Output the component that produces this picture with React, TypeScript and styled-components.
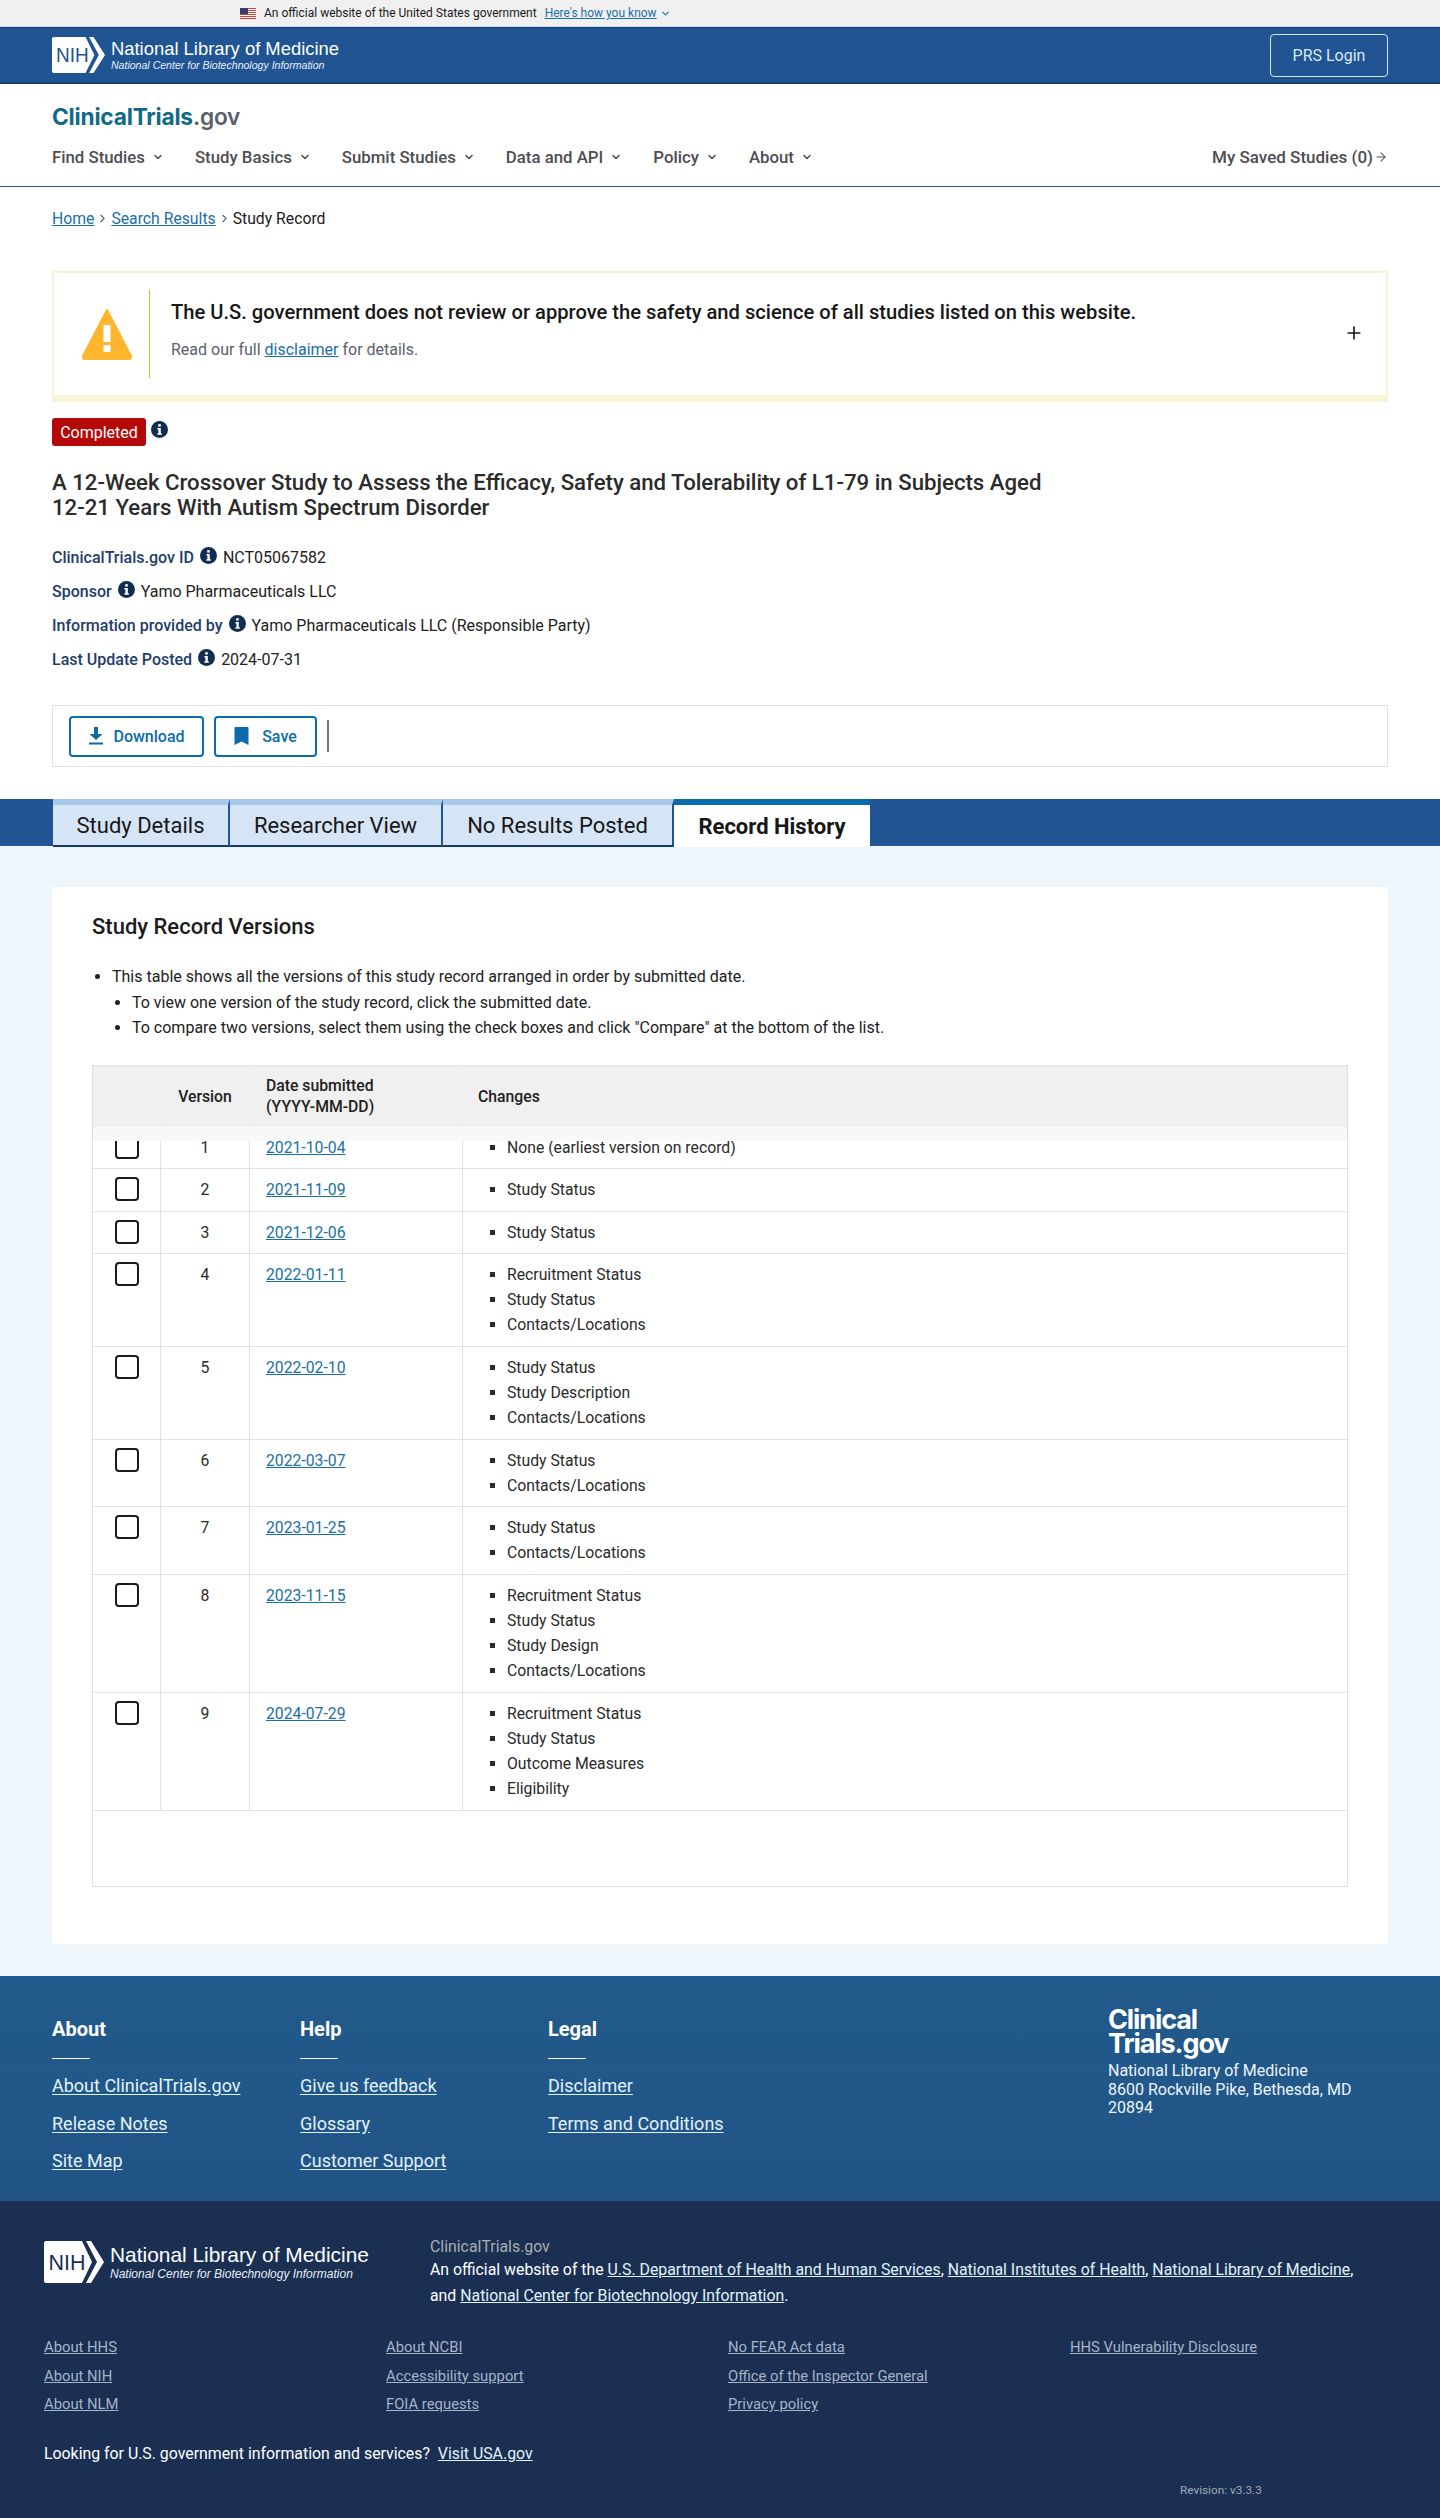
import React from "react";
import styled, { createGlobalStyle } from "styled-components";
import { ChevronDown, ChevronRight, ArrowRight, Plus } from "lucide-react";

const Global = createGlobalStyle`
  html, body { margin: 0; padding: 0; background: #fff; }
  body { font-family: Roboto, "Liberation Sans", sans-serif; font-size: 16px; color: #212121; }
  * { box-sizing: border-box; }
`;

const linkBlue = "#1a6fa5";

const Page = styled.div`width: 1440px; height: 2518px; overflow: hidden;`;

const GovBanner = styled.div`
  height: 27px; background: #f0f0f0; border-bottom: 1px solid #c9dff0;
  display: flex; align-items: center; padding-left: 240px; font-size: 12px; color: #1b1b1b;
`;
const GovText = styled.span`margin-left: 8px;`;
const GovLink = styled.a`margin-left: 8px; color: ${linkBlue}; text-decoration: underline;`;
const GovChevron = styled(ChevronDown)`margin-left: 3px; color: ${linkBlue};`;

const NihBand = styled.div`
  height: 57px; background: #205493; border-top: 1px solid #17406f; border-bottom: 2px solid #17406f;
  display: flex; align-items: center; justify-content: space-between; padding: 0 52px;
`;
const NihLogoWrap = styled.div<{ $footer?: boolean }>`
  display: flex; align-items: center; gap: 6px; color: #fff; font-family: "Liberation Sans", Arial, sans-serif;
`;
const NihTitle = styled.div<{ $footer?: boolean }>`
  font-size: ${p => (p.$footer ? 20.9 : 18.4)}px; line-height: ${p => (p.$footer ? 24 : 21)}px; white-space: nowrap;
`;
const NihSub = styled.div<{ $footer?: boolean }>`
  font-size: ${p => (p.$footer ? 12 : 10.55)}px; line-height: ${p => (p.$footer ? 14 : 13)}px; font-style: italic; white-space: nowrap; color: #e8eef6;
`;
const PrsLogin = styled.a`
  width: 118px; height: 43px; border: 1px solid #d9e8f6; border-radius: 4px; display: flex; align-items: center; justify-content: center;
  color: #d9e8f6; font-size: 16px;
`;

const SiteHeader = styled.header`
  height: 103px; border-bottom: 1px solid #205493; padding: 19px 52px 0;
`;
const Brand = styled.div`
  font-family: Inter, "Open Sans", sans-serif; font-size: 22.7px; font-weight: 700; line-height: 28px; color: #0f6a8a; letter-spacing: -0.2px;
`;
const BrandGov = styled.span`color: #5b616b; font-weight: 600;`;
const NavRow = styled.nav`
  display: flex; align-items: center; justify-content: space-between; margin-top: 14px; height: 24px;
`;
const NavItems = styled.div`display: flex; gap: 31px;`;
const NavItem = styled.a`
  display: flex; align-items: center; gap: 7px; font-size: 16.8px; font-weight: 500; color: #4d4d52; white-space: nowrap;
`;
const SavedLink = styled.a`
  display: flex; align-items: center; gap: 1px; font-size: 17px; font-weight: 500; color: #4d4d52; margin-top: -1px;
`;

const Breadcrumbs = styled.div`
  display: flex; align-items: center; gap: 2px; height: 24px; margin: 19px 52px 0; font-size: 15.75px; color: #212121;
`;
const Crumb = styled.a`color: ${linkBlue}; text-decoration: underline;`;
const CrumbSep = styled(ChevronRight)`color: #5b616b;`;

const Disclaimer = styled.section`
  margin: 41px 52px 0; height: 131px; border: 2px solid #f7f3d6; border-bottom-width: 7px; display: flex; align-items: center; position: relative;
`;
const WarnIconBox = styled.div`
  width: 96px; height: 88px; border-right: 1px solid #f0b429; display: flex; align-items: center; justify-content: flex-end; padding-right: 16px; flex: none;
`;
const DisclaimerBody = styled.div`padding: 0 0 9px 21px; flex: 1;`;
const DisclaimerTitle = styled.div`font-size: 20.15px; font-weight: 500; color: #171717; line-height: 28px;`;
const DisclaimerText = styled.div`font-size: 16px; color: #5b616b; line-height: 24px; margin-top: 12px;`;
const DisclaimerLink = styled.a`color: ${linkBlue}; text-decoration: underline;`;
const PlusIcon = styled(Plus)`margin: -2px 22px 0 0; color: #171717; flex: none;`;

const BadgeRow = styled.div`display: flex; align-items: flex-start; gap: 5px; margin: 16px 52px 0;`;
const Badge = styled.span`
  width: 94px; height: 28px; background: #b50909; color: #fff; border-radius: 3px; font-size: 16px; display: flex; align-items: center; justify-content: center;
`;
const InfoSvg = styled.svg<{ $mt?: number }>`flex: none; margin-top: ${p => p.$mt ?? 0}px;`;

const Title = styled.h1`
  margin: 24px 52px 0; width: 1020px; font-size: 22.2px; line-height: 25px; font-weight: 500; color: #2b2b2b;
`;
const Meta = styled.div`margin: 20px 52px 0;`;
const MetaRow = styled.div`height: 34px; display: flex; align-items: center; gap: 6px;`;
const MetaLabel = styled.span`font-size: 16px; font-weight: 500; color: #1f3c6b;`;
const MetaValue = styled.span`font-size: 16px; color: #212121; margin-top: 1px;`;

const ActionBar = styled.div`
  margin: 29px 52px 0; height: 62px; border: 1px solid #e4e2e0; display: flex; align-items: center; padding-left: 16px; gap: 10px;
`;
const ActionButton = styled.a<{ $w: number }>`
  width: ${p => p.$w}px; height: 41px; border: 2px solid #0b6cab; border-radius: 4px; color: #0b6cab; font-size: 16px; font-weight: 500;
  display: flex; align-items: center; justify-content: center; gap: 9px;
`;
const ActionDivider = styled.span`width: 2px; height: 32px; background: #71767a;`;

const TabBand = styled.div`
  margin-top: 32px; height: 47px; background: #205493; display: flex; padding-left: 53px;
`;
const Tab = styled.a<{ $w: number; $active?: boolean }>`
  width: ${p => p.$w}px; height: 48px; font-size: 22px; display: flex; align-items: center; justify-content: center; color: #171717;
  background: ${p => (p.$active ? "#fff" : "#d5e5f5")};
  border-top: 6px solid ${p => (p.$active ? "#0b6cab" : "#a9c9ea")};
  font-weight: ${p => (p.$active ? 700 : 400)};
  ${p => (p.$active ? "" : "border-right: 2px solid #205493; border-bottom: 2px solid #17396b;")}
`;

const Content = styled.main`
  height: 1130px; background: #eff6fb; padding: 41px 52px 0;
`;
const Card = styled.section`
  height: 1057px; background: #fff; padding: 24px 40px 0;
`;
const CardTitle = styled.h2`margin: 0; font-size: 22px; font-weight: 500; line-height: 32px; color: #1b1b1b;`;
const Intro = styled.ul`
  margin: 21px 0 0; padding: 0 0 0 20px; font-size: 16px; line-height: 25.6px; list-style: disc; color: #212121;
`;
const SubIntro = styled.ul`margin: 0; padding: 0 0 0 20px; list-style: disc;`;

const Table = styled.div`
  margin-top: 24px; border: 1px solid #dfe1e2; position: relative; height: 822px;
`;
const Cols = "68px 89px 213px 1fr";
const HeaderRow = styled.div`
  height: 61px; background: #f0f0f0; display: grid; grid-template-columns: ${Cols}; font-size: 15.75px; font-weight: 500; color: #212121; position: relative;
  &::after {
    content: ""; position: absolute; left: 0; right: 0; top: 61px; height: 14px; background: #f8f8f8; z-index: 2;
  }
`;
const HeadCell = styled.div<{ $center?: boolean }>`
  padding: 5px 16px; display: flex; align-items: center; line-height: 21px;
  justify-content: ${p => (p.$center ? "center" : "flex-start")};
  border-right: 1px solid #ececec;
  &:last-child { border-right: none; padding-left: 15px; }
`;
const Row = styled.div`
  display: grid; grid-template-columns: ${Cols}; border-bottom: 1px solid #dfe1e2; font-size: 15.75px; line-height: 25.2px; color: #2a2a2a;
`;
const Cell = styled.div<{ $center?: boolean }>`
  padding: 8px 16px 8.2px; border-right: 1px solid #dfe1e2;
  text-align: ${p => (p.$center ? "center" : "left")};
  &:last-child { border-right: none; }
`;
const CheckCell = styled(Cell)`padding: 8px 0 0 22px;`;
const Check = styled.span`
  display: block; width: 24px; height: 24px; border: 2px solid #1b1b1b; border-radius: 4px; background: #fff;
`;
const DateLink = styled.a`color: ${linkBlue}; text-decoration: underline;`;
const Changes = styled.ul`margin: 0; padding: 0 0 0 28px; list-style: square;`;

const FooterTop = styled.footer`
  height: 225px; background: linear-gradient(#215a8c, #225486); padding: 37px 52px 0 52px; display: flex; color: #fff;
`;
const FootCol = styled.div`width: 248px;`;
const FootHead = styled.div`font-size: 20px; font-weight: 700; line-height: 32px;`;
const FootRule = styled.div`width: 38px; height: 1px; background: #fff; margin: 13px 0 8px;`;
const FootLink = styled.a`
  display: block; font-size: 18px; line-height: 37.5px; color: #e1f3f8; text-decoration: underline; text-underline-offset: 2px; white-space: nowrap;
`;
const FootBrand = styled.div`margin-left: auto; width: 280px; margin-top: -5px;`;
const FootBrandName = styled.div`font-family: Inter, "Open Sans", sans-serif; font-size: 27px; font-weight: 700; line-height: 24px; letter-spacing: -1.1px;`;
const FootAddress = styled.div`font-size: 16px; line-height: 18.5px; margin-top: 6px; color: #eef5fb;`;

const FooterBottom = styled.footer`
  height: 317px; background: #1a2f52; padding: 35px 44px 0; color: #fff; position: relative;
`;
const OfficialRow = styled.div`display: flex;`;
const OfficialLogo = styled.div`width: 386px; padding-top: 5px;`;
const OfficialText = styled.div`width: 930px; font-size: 15.85px; line-height: 26px;`;
const OfficialName = styled.div`color: #a9aeb1; line-height: 21px;`;
const OfficialLink = styled.a`color: #e1f3f8; text-decoration: underline;`;
const LegalGrid = styled.div`
  margin-top: 24px; display: grid; grid-template-columns: repeat(4, 342px);
`;
const LegalLink = styled.a`
  display: block; font-size: 14.8px; line-height: 28.6px; color: #a6b4c8; text-decoration: underline; white-space: nowrap;
`;
const Usa = styled.div`margin-top: 23px; font-size: 15.85px; line-height: 24px; color: #fff;`;
const UsaLink = styled.a`color: #e1f3f8; text-decoration: underline; margin-left: 4px;`;
const Revision = styled.div`
  position: absolute; left: 1180px; top: 282px; font-size: 11.8px; color: #a0a9b5;
`;

const NihMark: React.FC<{ w: number; h: number; navy: string }> = ({ w, h, navy }) => (
  <svg width={w} height={h} viewBox="0 0 60 48" preserveAspectRatio="none" fill="none">
    <path d="M2 0H38L48 24L38 48H2C1 48 0 47 0 46V2C0 1 1 0 2 0Z" fill="#fff" />
    <path d="M42 0H47L60 24L47 48H42L53 24Z" fill="#fff" />
    <text x="4.5" y="33" fontFamily="Liberation Sans, Arial, sans-serif" fontSize="26" fill={navy} textLength="37" lengthAdjust="spacingAndGlyphs">NIH</text>
  </svg>
);

const Info: React.FC<{ mt?: number }> = ({ mt }) => (
  <InfoSvg $mt={mt} width="17" height="17" viewBox="0 0 17 17">
    <circle cx="8.5" cy="8.5" r="8.5" fill="#112e51" />
    <rect x="7.2" y="3.2" width="2.6" height="2.4" fill="#fff" />
    <path d="M6.4 7H9.8V12.2H10.8V13.8H6.4V12.2H7.4V8.6H6.4Z" fill="#fff" />
  </InfoSvg>
);

const Flag = () => (
  <svg width="16" height="11" viewBox="0 0 16 11">
    <rect width="16" height="11" fill="#fff" />
    {[0, 2, 4, 6, 8, 10].map(y => <rect key={y} y={y} width="16" height="1" fill="#d8412f" />)}
    <rect width="8" height="6" fill="#3c3b6e" />
  </svg>
);

const versions: { n: number; d: string; c: string[] }[] = [
  { n: 1, d: "2021-10-04", c: ["None (earliest version on record)"] },
  { n: 2, d: "2021-11-09", c: ["Study Status"] },
  { n: 3, d: "2021-12-06", c: ["Study Status"] },
  { n: 4, d: "2022-01-11", c: ["Recruitment Status", "Study Status", "Contacts/Locations"] },
  { n: 5, d: "2022-02-10", c: ["Study Status", "Study Description", "Contacts/Locations"] },
  { n: 6, d: "2022-03-07", c: ["Study Status", "Contacts/Locations"] },
  { n: 7, d: "2023-01-25", c: ["Study Status", "Contacts/Locations"] },
  { n: 8, d: "2023-11-15", c: ["Recruitment Status", "Study Status", "Study Design", "Contacts/Locations"] },
  { n: 9, d: "2024-07-29", c: ["Recruitment Status", "Study Status", "Outcome Measures", "Eligibility"] },
];

const meta: [string, string][] = [
  ["ClinicalTrials.gov ID", "NCT05067582"],
  ["Sponsor", "Yamo Pharmaceuticals LLC"],
  ["Information provided by", "Yamo Pharmaceuticals LLC (Responsible Party)"],
  ["Last Update Posted", "2024-07-31"],
];

const footCols: [string, string[]][] = [
  ["About", ["About ClinicalTrials.gov", "Release Notes", "Site Map"]],
  ["Help", ["Give us feedback", "Glossary", "Customer Support"]],
  ["Legal", ["Disclaimer", "Terms and Conditions"]],
];

const legal = [
  ["About HHS", "About NIH", "About NLM"],
  ["About NCBI", "Accessibility support", "FOIA requests"],
  ["No FEAR Act data", "Office of the Inspector General", "Privacy policy"],
  ["HHS Vulnerability Disclosure"],
];

export default function App() {
  return (
    <Page>
      <Global />
      <GovBanner>
        <Flag />
        <GovText>An official website of the United States government</GovText>
        <GovLink>Here's how you know</GovLink>
        <GovChevron size={11} strokeWidth={2.5} />
      </GovBanner>
      <NihBand>
        <NihLogoWrap>
          <NihMark w={53} h={36} navy="#205493" />
          <div>
            <NihTitle>National Library of Medicine</NihTitle>
            <NihSub>National Center for Biotechnology Information</NihSub>
          </div>
        </NihLogoWrap>
        <PrsLogin>PRS Login</PrsLogin>
      </NihBand>
      <SiteHeader>
        <Brand>ClinicalTrials<BrandGov>.gov</BrandGov></Brand>
        <NavRow>
          <NavItems>
            {["Find Studies", "Study Basics", "Submit Studies", "Data and API", "Policy", "About"].map(t => (
              <NavItem key={t}>{t}<ChevronDown size={12} strokeWidth={3} /></NavItem>
            ))}
          </NavItems>
          <SavedLink>My Saved Studies (0)<ArrowRight size={14} strokeWidth={1.75} /></SavedLink>
        </NavRow>
      </SiteHeader>
      <Breadcrumbs>
        <Crumb>Home</Crumb>
        <CrumbSep size={13} />
        <Crumb>Search Results</Crumb>
        <CrumbSep size={13} />
        <span>Study Record</span>
      </Breadcrumbs>
      <Disclaimer>
        <WarnIconBox>
          <svg width="52" height="52" viewBox="0 0 52 52">
            <path d="M26 2 L50 48 Q51 51 48 51 H4 Q1 51 2 48 Z" fill="#ffb52e" stroke="#ffb52e" strokeWidth="2" strokeLinejoin="round" />
            <rect x="22.5" y="17" width="7" height="17" fill="#fff" />
            <rect x="22.5" y="37" width="7" height="7" fill="#fff" />
          </svg>
        </WarnIconBox>
        <DisclaimerBody>
          <DisclaimerTitle>The U.S. government does not review or approve the safety and science of all studies listed on this website.</DisclaimerTitle>
          <DisclaimerText>Read our full <DisclaimerLink>disclaimer</DisclaimerLink> for details.</DisclaimerText>
        </DisclaimerBody>
        <PlusIcon size={20} strokeWidth={2} />
      </Disclaimer>
      <BadgeRow>
        <Badge>Completed</Badge>
        <Info mt={3} />
      </BadgeRow>
      <Title>A 12-Week Crossover Study to Assess the Efficacy, Safety and Tolerability of L1-79 in Subjects Aged 12-21 Years With Autism Spectrum Disorder</Title>
      <Meta>
        {meta.map(([l, v]) => (
          <MetaRow key={l}>
            <MetaLabel>{l}</MetaLabel>
            <Info mt={-3} />
            <MetaValue>{v}</MetaValue>
          </MetaRow>
        ))}
      </Meta>
      <ActionBar>
        <ActionButton $w={135}>
          <svg width="16" height="18" viewBox="0 0 16 18" fill="#0b6cab">
            <path d="M6 0H10V7H14.5L8 13L1.5 7H6Z" />
            <rect x="1" y="15.5" width="14" height="2" />
          </svg>
          Download
        </ActionButton>
        <ActionButton $w={103}>
          <svg width="15" height="18" viewBox="0 0 15 18" fill="#0b6cab">
            <path d="M1.5 0H13.5A1 1 0 0 1 14.5 1V18L7.5 14.5L0.5 18V1A1 1 0 0 1 1.5 0Z" />
          </svg>
          &nbsp;Save
        </ActionButton>
        <ActionDivider />
      </ActionBar>
      <TabBand>
        <Tab $w={177}>Study Details</Tab>
        <Tab $w={213}>Researcher View</Tab>
        <Tab $w={231}>No Results Posted</Tab>
        <Tab $w={196} $active>Record History</Tab>
      </TabBand>
      <Content>
        <Card>
          <CardTitle>Study Record Versions</CardTitle>
          <Intro>
            <li>
              This table shows all the versions of this study record arranged in order by submitted date.
              <SubIntro>
                <li>To view one version of the study record, click the submitted date.</li>
                <li>To compare two versions, select them using the check boxes and click "Compare" at the bottom of the list.</li>
              </SubIntro>
            </li>
          </Intro>
          <Table>
            <HeaderRow>
              <HeadCell />
              <HeadCell $center>Version</HeadCell>
              <HeadCell>Date submitted<br />(YYYY-MM-DD)</HeadCell>
              <HeadCell>Changes</HeadCell>
            </HeaderRow>
            {versions.map(v => (
              <Row key={v.n}>
                <CheckCell><Check /></CheckCell>
                <Cell $center>{v.n}</Cell>
                <Cell><DateLink>{v.d}</DateLink></Cell>
                <Cell>
                  <Changes>
                    {v.c.map(c => <li key={c}>{c}</li>)}
                  </Changes>
                </Cell>
              </Row>
            ))}
          </Table>
        </Card>
      </Content>
      <FooterTop>
        {footCols.map(([h, links]) => (
          <FootCol key={h}>
            <FootHead>{h}</FootHead>
            <FootRule />
            {links.map(l => <FootLink key={l}>{l}</FootLink>)}
          </FootCol>
        ))}
        <FootBrand>
          <FootBrandName>Clinical<br />Trials.gov</FootBrandName>
          <FootAddress>National Library of Medicine<br />8600 Rockville Pike, Bethesda, MD<br />20894</FootAddress>
        </FootBrand>
      </FooterTop>
      <FooterBottom>
        <OfficialRow>
          <OfficialLogo>
            <NihLogoWrap $footer>
              <NihMark w={60} h={42} navy="#1a2f52" />
              <div>
                <NihTitle $footer>National Library of Medicine</NihTitle>
                <NihSub $footer>National Center for Biotechnology Information</NihSub>
              </div>
            </NihLogoWrap>
          </OfficialLogo>
          <OfficialText>
            <OfficialName>ClinicalTrials.gov</OfficialName>
            An official website of the <OfficialLink>U.S. Department of Health and Human Services</OfficialLink>, <OfficialLink>National Institutes of Health</OfficialLink>, <OfficialLink>National Library of Medicine</OfficialLink>, and <OfficialLink>National Center for Biotechnology Information</OfficialLink>.
          </OfficialText>
        </OfficialRow>
        <LegalGrid>
          {legal.map((col, i) => (
            <div key={i}>
              {col.map(l => <LegalLink key={l}>{l}</LegalLink>)}
            </div>
          ))}
        </LegalGrid>
        <Usa>Looking for U.S. government information and services? <UsaLink>Visit USA.gov</UsaLink></Usa>
        <Revision>Revision: v3.3.3</Revision>
      </FooterBottom>
    </Page>
  );
}
